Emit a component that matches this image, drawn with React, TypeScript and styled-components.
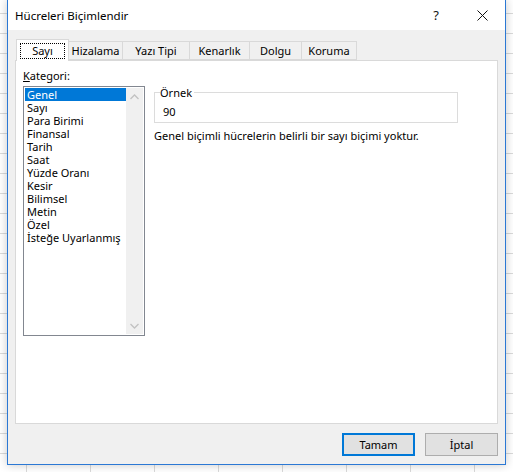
import * as React from 'react';
import styled, { createGlobalStyle } from 'styled-components';

const GlobalStyle = createGlobalStyle`
  html, body {
    margin: 0;
    padding: 0;
  }
  body {
    width: 513px;
    height: 472px;
    overflow: hidden;
    font-family: 'Noto Sans', 'Liberation Sans', sans-serif;
    background-color: #ffffff;
    background-image:
      linear-gradient(to right, #dadada 1px, transparent 1px),
      linear-gradient(to bottom, #dadada 1px, transparent 1px);
    background-size: 64px 20px;
    background-position: 26px 13px;
  }
`;

const Page = styled.div`
  padding: 0 7px;
`;

const Window = styled.div`
  width: 497px;
  height: 464px;
  border: 1px solid #2b78d4;
  border-top: none;
  background: #f0f0f0;
  box-shadow: 0 0 9px rgba(0, 0, 0, 0.22);
  display: flex;
  flex-direction: column;
`;

const TitleBar = styled.div`
  height: 30px;
  background: #ffffff;
  display: flex;
  align-items: center;
  padding-left: 7px;
  font-size: 11.5px;
  color: #000;
`;

const Title = styled.div`
  flex: 1;
`;

const TitleButton = styled.div`
  width: 46px;
  height: 30px;
  display: flex;
  align-items: center;
  justify-content: center;
  font-size: 13px;
  color: #111;
`;

const Body = styled.div`
  flex: 1;
  display: flex;
  flex-direction: column;
  padding: 9px 7px 0 7px;
`;

const TabStrip = styled.div`
  display: flex;
  align-items: flex-end;
  height: 21px;
  padding-left: 2px;
  position: relative;
  z-index: 1;
`;

const Tab = styled.div<{ $w: number; $active?: boolean }>`
  width: ${p => p.$w}px;
  height: ${p => (p.$active ? 22 : 19)}px;
  margin-bottom: ${p => (p.$active ? -1 : 0)}px;
  box-sizing: border-box;
  border: 1px solid #d9d9d9;
  border-bottom: ${p => (p.$active ? 'none' : '1px solid #d9d9d9')};
  margin-left: -1px;
  background: ${p => (p.$active ? '#ffffff' : '#f0f0f0')};
  display: flex;
  align-items: center;
  justify-content: center;
  font-size: 11px;
  color: #000;
`;

const FocusRect = styled.span`
  border: 1px dotted #000;
  padding: 0 11px;
  line-height: 14px;
`;

const Panel = styled.div`
  height: 364px;
  background: #ffffff;
  border: 1px solid #d9d9d9;
  display: flex;
  padding: 8px 0 0 7px;
  box-sizing: border-box;
  gap: 9px;
`;

const LeftCol = styled.div`
  display: flex;
  flex-direction: column;
`;

const Label = styled.div`
  font-size: 11px;
  height: 17px;
  line-height: 14px;
  u {
    text-decoration: underline;
    text-underline-offset: 1px;
  }
`;

const ListBox = styled.div`
  width: 122px;
  height: 250px;
  box-sizing: border-box;
  border: 1px solid #828790;
  display: flex;
  padding: 1px;
`;

const Items = styled.div`
  flex: 1;
  display: flex;
  flex-direction: column;
`;

const Item = styled.div<{ $selected?: boolean }>`
  height: 13px;
  line-height: 13px;
  font-size: 11px;
  padding-left: 2px;
  background: ${p => (p.$selected ? '#0078d7' : 'transparent')};
  color: ${p => (p.$selected ? '#ffffff' : '#000')};
  white-space: nowrap;
`;

const ScrollBar = styled.div`
  width: 17px;
  background: #f0f0f0;
  display: flex;
  flex-direction: column;
  justify-content: space-between;
  align-items: center;
`;

const Arrow = styled.div`
  height: 17px;
  width: 17px;
  display: flex;
  align-items: center;
  justify-content: center;
`;

const RightCol = styled.div`
  display: flex;
  flex-direction: column;
  padding-top: 16px;
`;

const Fieldset = styled.fieldset`
  width: 304px;
  height: 38px;
  box-sizing: border-box;
  margin: 0;
  border: 1px solid #dcdcdc;
  padding: 0 0 0 8px;
  legend {
    font-size: 11px;
    padding: 0 2px 0 0;
    margin-left: -3px;
    line-height: 15px;
  }
`;

const Sample = styled.div`
  font-size: 11px;
  line-height: 16px;
  padding-top: 4px;
`;

const Description = styled.div`
  font-size: 11px;
  margin-top: 5px;
  line-height: 15px;
`;

const Footer = styled.div`
  flex: 1;
  display: flex;
  justify-content: flex-end;
  align-items: flex-start;
  gap: 10px;
  padding-top: 9px;
`;

const Button = styled.div<{ $default?: boolean }>`
  width: 73px;
  height: 23px;
  box-sizing: border-box;
  border: ${p => (p.$default ? '2px solid #0078d7' : '1px solid #adadad')};
  background: #e1e1e1;
  display: flex;
  align-items: center;
  justify-content: center;
  font-size: 11px;
  color: #000;
`;

const categories = [
  'Genel',
  'Sayı',
  'Para Birimi',
  'Finansal',
  'Tarih',
  'Saat',
  'Yüzde Oranı',
  'Kesir',
  'Bilimsel',
  'Metin',
  'Özel',
  'İsteğe Uyarlanmış',
];

const tabs = [
  { name: 'Hizalama', w: 55 },
  { name: 'Yazı Tipi', w: 68 },
  { name: 'Kenarlık', w: 61 },
  { name: 'Dolgu', w: 53 },
  { name: 'Koruma', w: 56 },
];

const Chevron = ({ up }: { up?: boolean }) => (
  <svg width="9" height="6" viewBox="0 0 9 6">
    <path
      d={up ? 'M0.5 5 L4.5 1 L8.5 5' : 'M0.5 1 L4.5 5 L8.5 1'}
      fill="none"
      stroke="#c2c2c2"
      strokeWidth="1.3"
    />
  </svg>
);

const App = () => {
  return (
    <Page>
      <GlobalStyle />
      <Window>
        <TitleBar>
          <Title>Hücreleri Biçimlendir</Title>
          <TitleButton>?</TitleButton>
          <TitleButton>
            <svg width="11" height="11" viewBox="0 0 11 11">
              <path d="M0.5 0.5 L10.5 10.5 M10.5 0.5 L0.5 10.5" stroke="#111" strokeWidth="1" />
            </svg>
          </TitleButton>
        </TitleBar>
        <Body>
          <TabStrip>
            <Tab $w={53} $active>
              <FocusRect>Sayı</FocusRect>
            </Tab>
            {tabs.map(t => (
              <Tab key={t.name} $w={t.w}>
                {t.name}
              </Tab>
            ))}
          </TabStrip>
          <Panel>
            <LeftCol>
              <Label>
                <u>K</u>ategori:
              </Label>
              <ListBox>
                <Items>
                  {categories.map((c, i) => (
                    <Item key={c} $selected={i === 0}>
                      {c}
                    </Item>
                  ))}
                </Items>
                <ScrollBar>
                  <Arrow>
                    <Chevron up />
                  </Arrow>
                  <Arrow>
                    <Chevron />
                  </Arrow>
                </ScrollBar>
              </ListBox>
            </LeftCol>
            <RightCol>
              <Fieldset>
                <legend>Örnek</legend>
                <Sample>90</Sample>
              </Fieldset>
              <Description>Genel biçimli hücrelerin belirli bir sayı biçimi yoktur.</Description>
            </RightCol>
          </Panel>
          <Footer>
            <Button $default>Tamam</Button>
            <Button>İptal</Button>
          </Footer>
        </Body>
      </Window>
    </Page>
  );
};

export default App;
